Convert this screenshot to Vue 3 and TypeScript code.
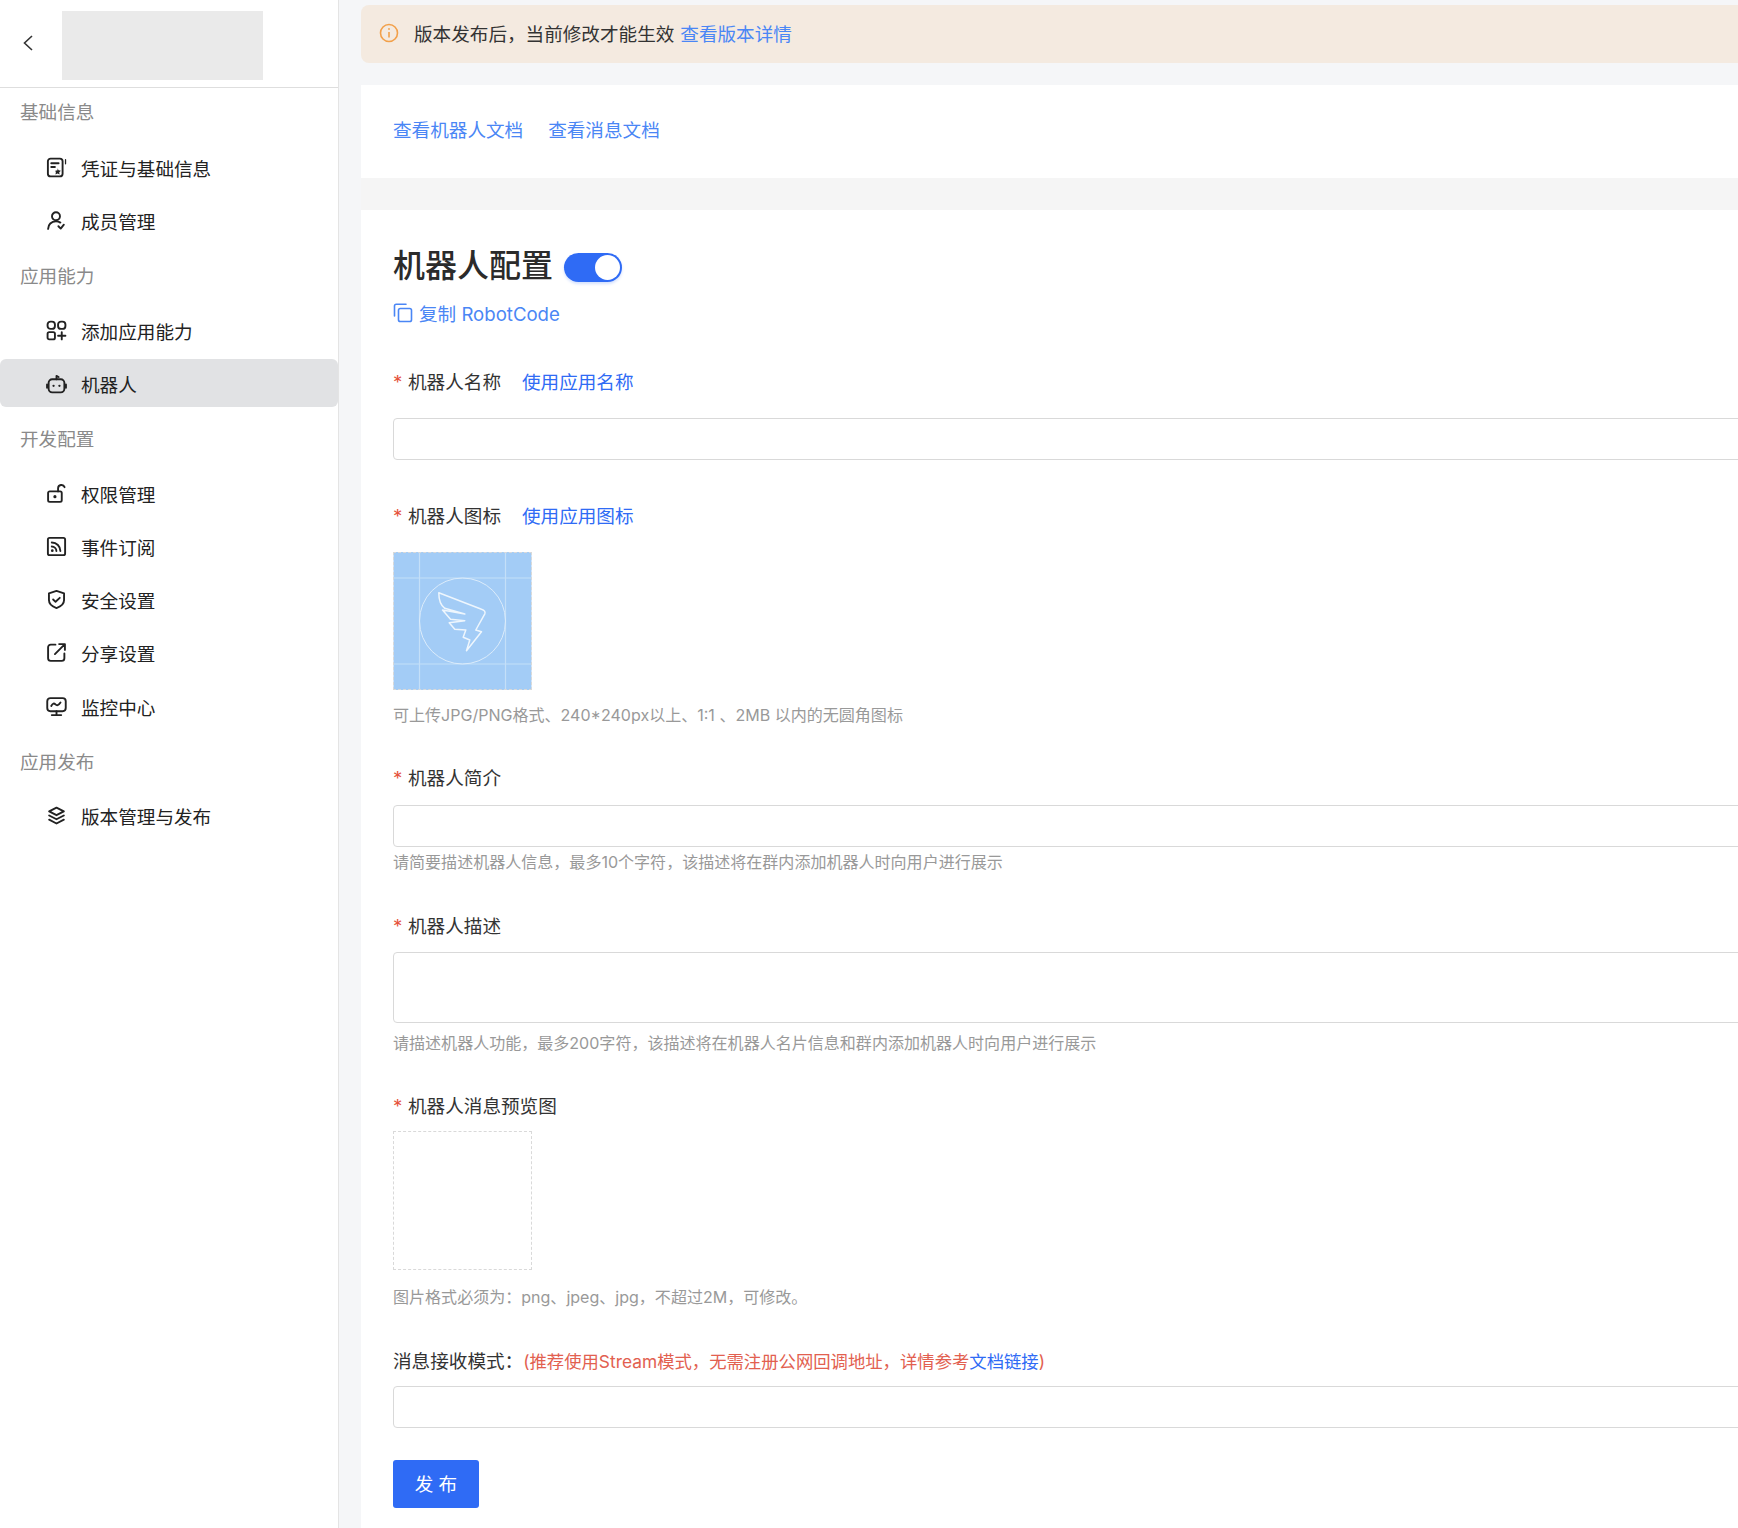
<script setup lang="ts">
interface NavItem {
  label: string;
  icon: string;
  active?: boolean;
}

interface NavGroup {
  title: string;
  items: NavItem[];
}

const nav_groups: NavGroup[] = [
  {
    title: '基础信息',
    items: [
      { label: '凭证与基础信息', icon: 'doc' },
      { label: '成员管理', icon: 'member' },
    ],
  },
  {
    title: '应用能力',
    items: [
      { label: '添加应用能力', icon: 'apps' },
      { label: '机器人', icon: 'robot', active: true },
    ],
  },
  {
    title: '开发配置',
    items: [
      { label: '权限管理', icon: 'lock' },
      { label: '事件订阅', icon: 'rss' },
      { label: '安全设置', icon: 'shield' },
      { label: '分享设置', icon: 'share' },
      { label: '监控中心', icon: 'monitor' },
    ],
  },
  {
    title: '应用发布',
    items: [{ label: '版本管理与发布', icon: 'layers' }],
  },
];
</script>

<template>
  <div class="page">
    <aside class="sidebar">
      <div class="side_head">
        <svg class="back" width="12" height="18" viewBox="0 0 12 18">
          <path d="M10 2 L2.5 9 L10 16" fill="none" stroke="#333" stroke-width="1.6" />
        </svg>
        <div class="logo_box"></div>
      </div>
      <nav class="side_nav">
        <template v-for="group in nav_groups" :key="group.title">
          <div class="nav_title">{{ group.title }}</div>
          <div
            v-for="item in group.items"
            :key="item.label"
            class="nav_item"
            :class="{ active: item.active }"
          >
            <svg class="nav_icon" width="21" height="21" viewBox="0 0 20 20" fill="none" stroke="#222" stroke-width="1.8" stroke-linecap="round" stroke-linejoin="round">
              <template v-if="item.icon === 'doc'">
                <rect x="1.8" y="1.5" width="14" height="17" rx="2.6" />
                <path d="M5 6h7M5 9.5h3.5" />
                <path d="M11 10.6l1 2.1 2.2.3-1.6 1.5.4 2.2-2-1.1-2 1.1.4-2.2L8.800 13l2.200-.3z" fill="#222" stroke="none" />
                <path d="M18.600 2.500v4" stroke-width="1.200" />
              </template>
              <template v-else-if="item.icon === 'member'">
                <circle cx="9.500" cy="6" r="3.800" />
                <path d="M2 18c0-4 3-7.200 7.500-7.200 1.600 0 3 .4 4.200 1.200" />
                <path d="M11.800 15.500l2.200 2.200 3-3.700" />
              </template>
              <template v-else-if="item.icon === 'apps'">
                <rect x="1.500" y="1.500" width="7" height="7" rx="2.800" />
                <rect x="11.500" y="1.500" width="7" height="7" rx="2.800" />
                <rect x="1.500" y="11.500" width="7" height="7" rx="1.600" />
                <path d="M15 11.500v7M11.500 15h7" />
              </template>
              <template v-else-if="item.icon === 'robot'">
                <rect x="2.500" y="6" width="15" height="12.500" rx="3.400" />
                <path d="M10 6V2.800l2 1" />
                <path d="M1 11v3M19 11v3" />
                <circle cx="7.200" cy="12.200" r="1.100" fill="#222" stroke="none" />
                <circle cx="12.800" cy="12.200" r="1.100" fill="#222" stroke="none" />
              </template>
              <template v-else-if="item.icon === 'lock'">
                <rect x="2" y="8" width="13" height="10" rx="1.500" />
                <path d="M11.500 8V5a3.200 3.200 0 0 1 6.200-1" />
                <circle cx="8.500" cy="13" r="1.500" fill="#222" stroke="none" />
              </template>
              <template v-else-if="item.icon === 'rss'">
                <rect x="1.800" y="1.800" width="16.400" height="16.400" rx="1.600" />
                <path d="M5.500 6.200c4.600 0 8.200 3.600 8.200 8.200M5.500 10c2.400 0 4.400 2 4.400 4.400" />
                <circle cx="6" cy="14" r="1.300" fill="#222" stroke="none" />
              </template>
              <template v-else-if="item.icon === 'shield'">
                <path d="M10 1.800l7.200 2.400v6.300c0 3.600-3.300 6.300-7.200 7.700-3.900-1.400-7.200-4.100-7.200-7.700V4.200z" />
                <path d="M6.800 10l2.300 2.200 4-3.800" />
              </template>
              <template v-else-if="item.icon === 'share'">
                <path d="M9 2.500H4.500a2.500 2.500 0 0 0-2.500 2.500v10.500a2.500 2.500 0 0 0 2.500 2.500H15a2.500 2.500 0 0 0 2.500-2.500V11" />
                <path d="M8.500 11.500l9-9M12.500 2h5.500v5.500" />
              </template>
              <template v-else-if="item.icon === 'monitor'">
                <rect x="1.200" y="2" width="17.600" height="12.500" rx="3" />
                <path d="M5 9.500c1.500-2.800 2.700-2.800 4-1.500s2.800 1.200 4.800-1.800" />
                <path d="M10 14.500v3.500M5.500 18.200h9" />
              </template>
              <template v-else-if="item.icon === 'layers'">
                <path d="M10 2.500l7 3.600-7 3.600-7-3.600z" />
                <path d="M3 10l7 3.600 7-3.600" />
                <path d="M3 14l7 3.600 7-3.600" />
              </template>
            </svg>
            <span>{{ item.label }}</span>
          </div>
        </template>
      </nav>
    </aside>

    <main class="content">
      <div class="notice">
        <svg class="notice_icon" width="20" height="20" viewBox="0 0 20 20" fill="none" stroke="#f2a04a" stroke-width="1.600">
          <circle cx="10" cy="10" r="8.500" />
          <path d="M10 9v5.500" />
          <circle cx="10" cy="6" r="0.900" fill="#f2a04a" stroke="none" />
        </svg>
        <span>版本发布后，当前修改才能生效</span>
        <a class="link notice_link">查看版本详情</a>
      </div>

      <section class="doc_card">
        <a class="link">查看机器人文档</a>
        <a class="link">查看消息文档</a>
      </section>

      <section class="form_card">
        <div class="title_row">
          <h2>机器人配置</h2>
          <span class="switch"><i></i></span>
        </div>
        <a class="link copy_row">
          <svg class="copy_icon" width="20" height="20" viewBox="0 0 20 20" fill="none" stroke="#4a86f5" stroke-width="1.600" stroke-linejoin="round" stroke-linecap="round">
            <path d="M1.500 13V3a1.800 1.800 0 0 1 1.800-1.800H13" />
            <rect x="5.500" y="5.500" width="13" height="13" rx="1.800" />
          </svg>
          复制 RobotCode
        </a>

        <div class="label first_label"><b>*</b>机器人名称<a class="link label_link">使用应用名称</a></div>
        <div class="field gap_a"></div>

        <div class="label label_a"><b>*</b>机器人图标<a class="link label_link">使用应用图标</a></div>
        <svg class="preview_img" width="139" height="138" viewBox="0 0 138 138" fill="none">
          <rect width="138" height="138" fill="#a3ccf6" />
          <path d="M26 0v138M112 0v138M0 26h138M0 112h138" stroke="#c4dff8" stroke-width="1.200" />
          <circle cx="69" cy="69" r="43" stroke="#dcecfb" stroke-width="1" />
          <path d="M45.300 40.700L88 57.300q4.500 1.500 3.300 4.500L82.300 78 88 79.700 73 98.700 76.300 88 69.700 85.300 72.300 78 61.300 77.300 55.700 70.700 71.300 68.700 57 67.300 49 58 71.300 62 51.300 56.300Q45.300 52 45.300 40.700Z" stroke="#eef6fd" stroke-width="1.500" stroke-linejoin="round" />
        </svg>
        <div class="hint hint_a">可上传JPG/PNG格式、240*240px以上、1:1 、2MB 以内的无圆角图标</div>

        <div class="label label_b"><b>*</b>机器人简介</div>
        <div class="field gap_b"></div>
        <div class="hint hint_b">请简要描述机器人信息，最多10个字符，该描述将在群内添加机器人时向用户进行展示</div>

        <div class="label label_c"><b>*</b>机器人描述</div>
        <div class="field area"></div>
        <div class="hint hint_c">请描述机器人功能，最多200字符，该描述将在机器人名片信息和群内添加机器人时向用户进行展示</div>

        <div class="label label_b"><b>*</b>机器人消息预览图</div>
        <div class="upload_box"></div>
        <div class="hint hint_d">图片格式必须为：png、jpeg、jpg，不超过2M，可修改。</div>

        <div class="label label_c">消息接收模式：<span class="tip">(推荐使用Stream模式，无需注册公网回调地址，详情参考<a class="tip_link">文档链接</a>)</span></div>
        <div class="field gap_c"></div>

        <button class="publish" type="button">发 布</button>
      </section>
    </main>
  </div>
</template>

<style scoped>
.page {
  display: flex;
  height: 100vh;
  overflow: hidden;
  font-family: Inter, "Noto Sans CJK SC", sans-serif;
  font-size: 18.6px;
  color: #333;
}

.sidebar {
  width: 339px;
  flex-shrink: 0;
  background: #fff;
  border-right: 1px solid #e4e4e4;
  box-sizing: border-box;
}

.side_head {
  height: 88px;
  box-sizing: border-box;
  border-bottom: 1px solid #dedede;
  display: flex;
  align-items: flex-start;
  padding: 11px 0 0 22px;
}

.back {
  margin-top: 23px;
}

.logo_box {
  width: 201px;
  height: 69px;
  margin-left: 28px;
  background: #eaeaea;
}

.side_nav {
  display: flex;
  flex-direction: column;
  gap: 5.3px;
  padding-top: 0.4px;
}

.nav_title {
  height: 48px;
  line-height: 48px;
  margin-top: 2px;
  margin-bottom: 1px;
  padding-left: 20px;
  color: #8a8a8a;
}

.nav_title:first-child {
  margin-top: 0;
  margin-bottom: 1.6px;
}

.nav_item {
  height: 48px;
  display: flex;
  align-items: center;
  gap: 14px;
  padding-left: 46px;
  border-radius: 6px;
  color: #222;
}

.nav_item.active {
  background: #e1e2e4;
}

.nav_icon {
  flex-shrink: 0;
}

.content {
  flex: 1;
  min-width: 0;
  overflow: hidden;
  background: #f5f6f8;
  padding: 5px 0 0 22px;
  display: flex;
  flex-direction: column;
}

.notice {
  height: 58px;
  flex-shrink: 0;
  box-sizing: border-box;
  margin-right: -20px;
  margin-bottom: 22px;
  padding: 0 0 4px 18px;
  background: #f4eae0;
  border-radius: 8px;
  display: flex;
  align-items: center;
  color: #333;
}

.notice_icon {
  margin-right: 15px;
  margin-top: 2px;
}

.notice_link {
  margin-left: 6px;
}

.link {
  color: #4a86f5;
  text-decoration: none;
}

.doc_card {
  height: 93px;
  flex-shrink: 0;
  box-sizing: border-box;
  background: #fff;
  padding: 0 0 6px 32px;
  display: flex;
  align-items: center;
  gap: 25px;
  margin-bottom: 32px;
}

.form_card {
  flex: 1;
  background: #fff;
  padding: 34px 0 0 32px;
  position: relative;
  box-shadow: 0 -32px 0 #f5f5f5;
}

.title_row {
  display: flex;
  align-items: center;
  gap: 11px;
  height: 44px;
}

.title_row h2 {
  margin: 0;
  font-size: 32px;
  font-weight: 500;
  line-height: 44px;
  color: #2b2b2b;
}

.switch {
  width: 58px;
  height: 29px;
  border-radius: 15px;
  background: #2f6bf5;
  position: relative;
  margin-top: 2px;
  box-shadow: 0 2px 3px rgba(47, 107, 245, 0.2);
}

.switch i {
  position: absolute;
  right: 2px;
  top: 2px;
  width: 25px;
  height: 25px;
  border-radius: 50%;
  background: #fff;
}

.copy_row {
  height: 26px;
  margin-top: 11px;
  display: flex;
  align-items: center;
  gap: 6px;
}

.copy_icon {
  margin-top: 2px;
}

.label {
  height: 26px;
  line-height: 26px;
  color: #333;
  white-space: nowrap;
}

.label b {
  display: inline-block;
  width: 15px;
  font-weight: 400;
  color: #e5533d;
}

.first_label {
  margin-top: 44px;
}

.label_a {
  margin-top: 43px;
}

.label_b {
  margin-top: 38px;
}

.label_c {
  margin-top: 39px;
}

.label_link {
  margin-left: 21px;
  color: #2f6bf5;
}

.field {
  height: 42px;
  box-sizing: border-box;
  margin-right: -20px;
  border: 1px solid #d9d9d9;
  border-radius: 4px;
  background: #fff;
}

.gap_a {
  margin-top: 23px;
}

.gap_b {
  margin-top: 14px;
}

.gap_c {
  margin-top: 12px;
}

.area {
  height: 71px;
  margin-top: 13px;
}

.preview_img {
  display: block;
  margin-top: 23px;
  outline: 1px dashed #d9d9d9;
  outline-offset: -1px;
}

.upload_box {
  width: 139px;
  height: 139px;
  box-sizing: border-box;
  margin-top: 12px;
  border: 1px dashed #d9d9d9;
}

.hint {
  height: 24px;
  line-height: 24px;
  font-size: 16.050px;
  color: #999;
  white-space: nowrap;
}

.hint_a {
  margin-top: 13px;
}

.hint_b {
  margin-top: 3px;
}

.hint_c {
  margin-top: 8px;
}

.hint_d {
  margin-top: 15px;
}

.tip {
  font-size: 17.350px;
  color: #e2604f;
}

.tip_link {
  color: #2f6bf5;
}

.publish {
  display: block;
  width: 86px;
  height: 48px;
  margin-top: 32px;
  padding: 0 0 3px;
  border: none;
  border-radius: 3px;
  background: #2f6bf5;
  color: #fff;
  font: inherit;
}
</style>

<style>
html,
body {
  margin: 0;
  background: #fff;
}
</style>
